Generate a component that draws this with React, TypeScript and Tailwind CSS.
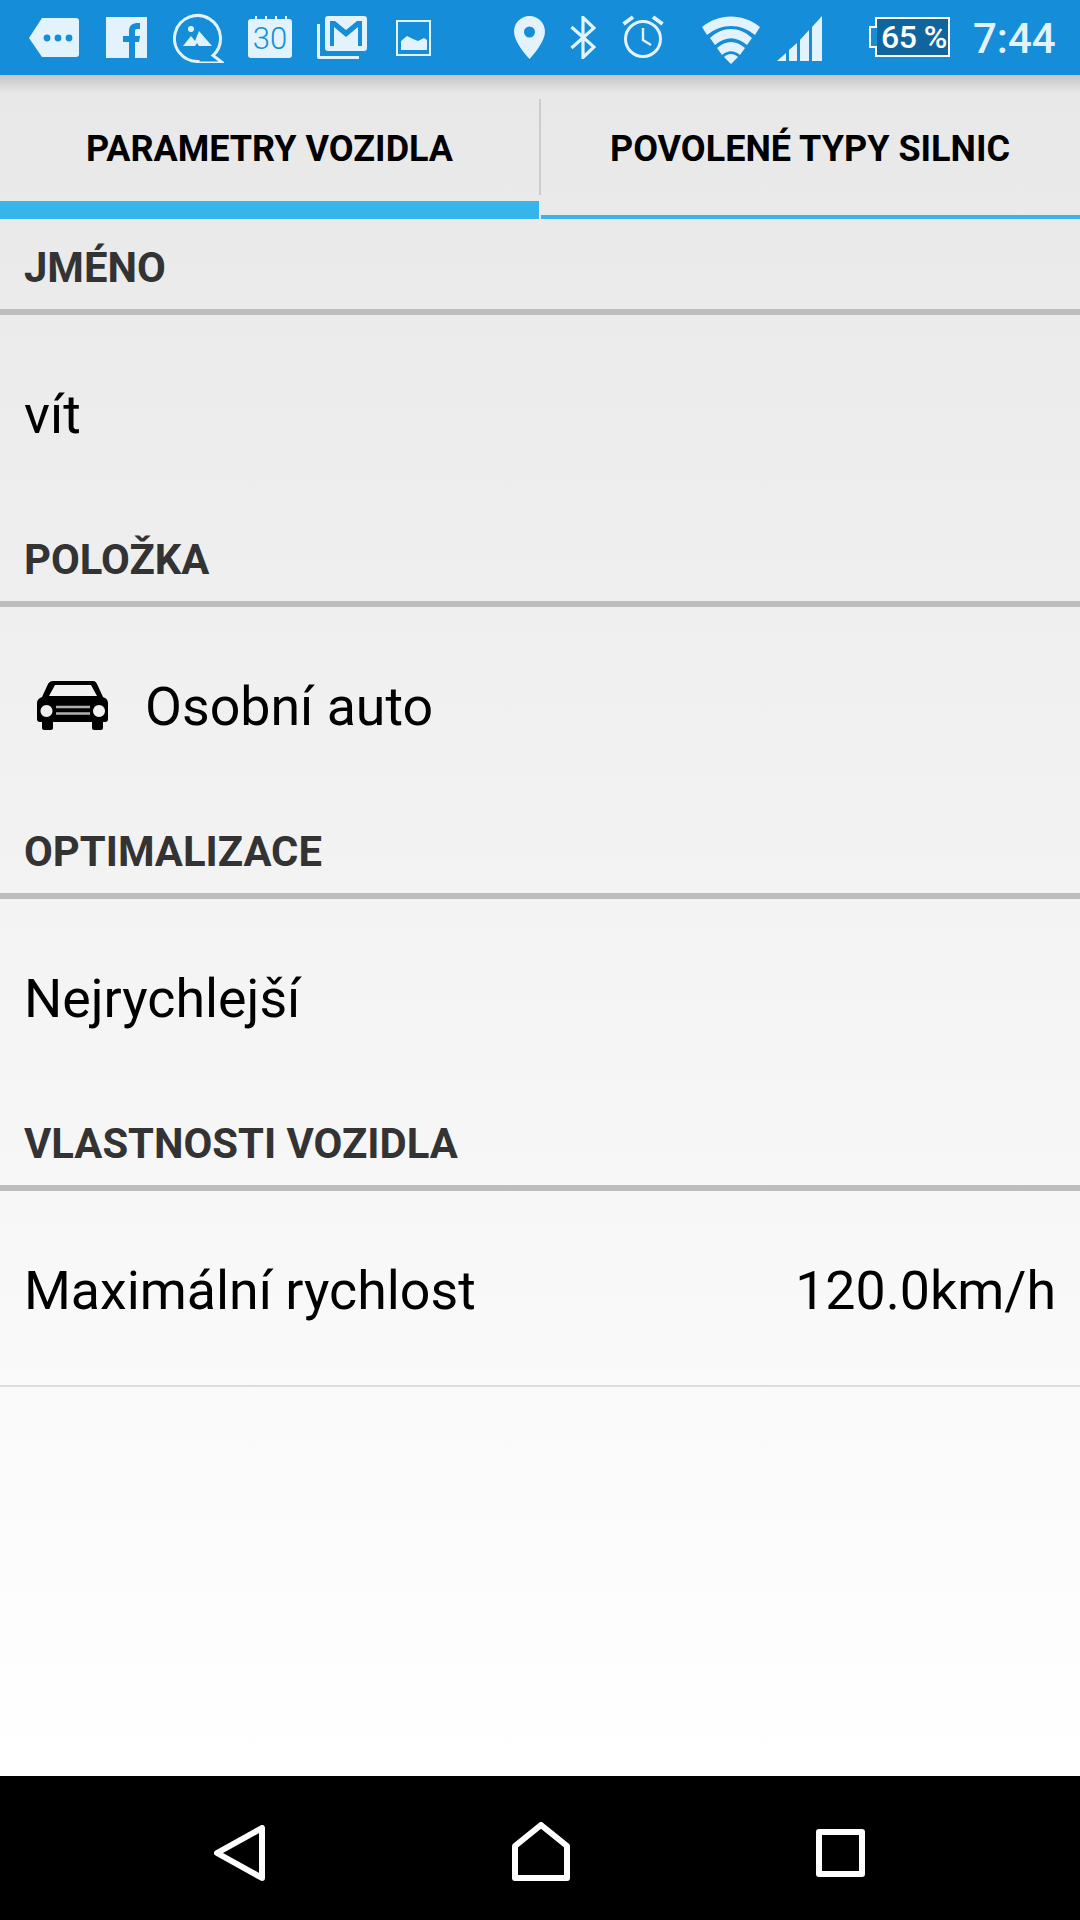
const blue = '#158dd9';
const ice = '#e3f3fd';

function StatusIcons() {
  return (
    <>
      <svg width="50" height="39" viewBox="0 0 50 39" className="ml-[29px] mt-[18px]">
        <path d="M13 0H47a3 3 0 0 1 3 3V36a3 3 0 0 1-3 3H13L0 20Z" fill={ice} />
        <circle cx="18" cy="20" r="3.4" fill={blue} />
        <circle cx="29" cy="20" r="3.4" fill={blue} />
        <circle cx="40" cy="20" r="3.4" fill={blue} />
      </svg>
      <svg width="41" height="41" viewBox="0 0 41 41" className="ml-[27px] mt-[17px]">
        <rect width="41" height="41" fill={ice} />
        <path d="M23 41V25H17V19H23V14C23 8 27 6 32 6H34V12H31C29 12 29 13 29 15V19H34L33 25H29V41Z" fill={blue} />
      </svg>
      <svg width="51" height="51" viewBox="0 0 51 51" className="ml-[26px] mt-[12px]">
        <path d="M25 49.5A23 23 0 1 1 40 43.5L50 51H25Z" fill="none" stroke={ice} strokeWidth="3" />
        <circle cx="18" cy="17" r="3" fill={ice} />
        <path d="M10 34L18 24L22 29L26 19L39 34H26L24 31L22 34Z" fill={ice} />
      </svg>
      <div className="relative ml-[24px] mt-[15px] w-[44px] h-[43px]">
        <svg width="44" height="43" viewBox="0 0 44 43" className="absolute inset-0">
          <path d="M3 4H7V1H9V4H17V1H19V4H27V1H29V4H37V1H39V4H41a3 3 0 0 1 3 3V40a3 3 0 0 1-3 3H3a3 3 0 0 1-3-3V7a3 3 0 0 1 3-3Z" fill={ice} />
        </svg>
        <span className="absolute inset-x-0 top-[6px] text-center text-[31px] leading-[36px] font-light text-[#158dd9]">30</span>
      </div>
      <svg width="50" height="43" viewBox="0 0 50 43" className="ml-[25px] mt-[16px]">
        <path d="M0 8H3V40H42V43H2a2 2 0 0 1-2-2Z" fill={ice} />
        <rect x="8" y="0" width="42" height="35" rx="3" fill={ice} />
        <path d="M13 30V5H18L29 14L40 5H45V30H41V11L29 21L17 11V30Z" fill={blue} />
      </svg>
      <svg width="35" height="36" viewBox="0 0 35 36" className="ml-[29px] mt-[20px]">
        <rect x="1" y="1" width="33" height="34" fill="none" stroke={ice} strokeWidth="2" />
        <path d="M5 30V21L11 16L17 19L22 21L28 18L31 20V30Z" fill={ice} />
      </svg>
      <svg width="31" height="43" viewBox="0 0 31 43" className="ml-[83px] mt-[16px]">
        <path fillRule="evenodd" d="M15.5 0C7 0 0 7 0 15.5C0 25 10 37 15.5 43C21 37 31 25 31 15.5C31 7 24 0 15.5 0ZM15.5 10.5a5.5 5.5 0 1 1 0 11a5.5 5.5 0 0 1 0-11Z" fill={ice} />
      </svg>
      <svg width="26" height="43" viewBox="0 0 26 43" className="ml-[25px] mt-[16px]">
        <path d="M1.5 11L24 31L13 41.5V1.5L24 12L1.5 32" fill="none" stroke={ice} strokeWidth="3.2" />
      </svg>
      <svg width="42" height="43" viewBox="0 0 42 43" className="ml-[26px] mt-[15px]">
        <circle cx="21" cy="24" r="17.5" fill="none" stroke={ice} strokeWidth="3" />
        <path d="M21 13V25L29 30" fill="none" stroke={ice} strokeWidth="2.4" />
        <path d="M1.5 9L11 2M40.5 9L31 2" fill="none" stroke={ice} strokeWidth="4" />
      </svg>
      <svg width="58" height="48" viewBox="0 0 58 48" className="ml-[38px] mt-[16px]">
        <path d="M0 11C17 -3 41 -3 58 11L53 19C38 7 20 7 5 19Z" fill={ice} />
        <path d="M8 22C21 10 37 10 50 22L45 29C34 20 24 20 13 29Z" fill={ice} />
        <path d="M15 32C24 24 34 24 43 32L38 39C32 34 26 34 20 39Z" fill={ice} />
        <path d="M22 41C26 37 32 37 36 41L29 48Z" fill={ice} />
      </svg>
      <svg width="45" height="45" viewBox="0 0 45 45" className="ml-[17px] mt-[16px]">
        <path d="M0 45L9 37V45Z" fill={ice} />
        <path d="M12 34L20 27V45H12Z" fill={ice} />
        <path d="M23 24L32 14V45H23Z" fill={ice} />
        <path d="M35 11L45 0V45H35Z" fill={ice} />
      </svg>
      <div className="ml-[47px] mt-[17px] h-[40px] w-[81px] flex items-stretch">
        <svg width="81" height="40" viewBox="0 0 81 40" className="absolute">
          <path d="M7 1H80V39H7V30H1V10H7Z" fill="#10659f" stroke="#ffffff" strokeWidth="2" />
          <path d="M2 11H8V29H2Z" fill={blue} />
        </svg>
        <span className="relative w-full pl-[12px] text-[32px] leading-[40px] font-medium tracking-[-0.5px] text-white whitespace-nowrap">65 %</span>
      </div>
      <span className="ml-[23px] mt-[16px] text-[42px] leading-[46px] font-medium text-[#e3f3fd]">7:44</span>
    </>
  );
}

function SectionHeader({ title, first }: { title: string; first?: boolean }) {
  return (
    <div className={first ? 'pt-[6px]' : ''}>
      <div className="h-[84px] px-[24px] pt-[3px] flex items-center text-[41.8px] font-bold text-[#333333]">{title}</div>
      <div className="h-[6px] bg-[#bdbdbd]" />
    </div>
  );
}

function CarIcon() {
  return (
    <svg width="71" height="49" viewBox="0 0 71 49" className="ml-[37px] mr-[37px] mb-[4px]">
      <path
        fillRule="evenodd"
        d="M16 0H56C58 0 59 1 60 3L66 16C69 17 71 19 71 22V38C71 40 70 41 68 41H66V47C66 48 65 49 64 49H57C56 49 55 48 55 47V41H16V47C16 48 15 49 14 49H7C6 49 5 48 5 47V41H3C1 41 0 40 0 38V22C0 19 2 17 5 16L11 3C12 1 14 0 16 0ZM18 4L12 15H60L54 4ZM9.5 24a6 6 0 1 0 0.01 0ZM62 24a6 6 0 1 0 0.01 0Z"
        fill="#000000"
      />
      <path d="M19 26H53M19 32.5H53" stroke="#b0b0b0" strokeWidth="2.4" />
    </svg>
  );
}

export default function App() {
  return (
    <div className="relative w-[1080px] h-[1920px] flex flex-col overflow-hidden font-['Roboto',sans-serif] bg-white">
      <div className="h-[75px] flex items-start bg-[#158dd9] shrink-0">
        <StatusIcons />
      </div>

      <div className="flex-1 flex flex-col bg-gradient-to-b from-[#e8e8e8] to-[#ffffff]">
        <div className="h-[144px] flex shrink-0">
          <div className="w-[539px] flex flex-col">
            <div className="flex-1 flex items-center justify-center text-[36px] font-bold text-black pt-[21px]">PARAMETRY VOZIDLA</div>
            <div className="h-[18px] bg-[#35b5e9]" />
          </div>
          <div className="w-[2px] flex flex-col pt-[24px] pb-[24px] bg-transparent">
            <div className="flex-1 bg-[#cccccc]" />
          </div>
          <div className="flex-1 flex flex-col">
            <div className="flex-1 flex items-center justify-center text-[36px] font-bold text-black pt-[8px] pr-[1px]">POVOLENÉ TYPY SILNIC</div>
            <div className="h-[4px] bg-[#35b5e9]" />
          </div>
        </div>

        <SectionHeader title="JMÉNO" first />
        <div className="h-[202px] px-[24px] pb-[2px] flex items-center text-[53.7px] text-black">vít</div>

        <SectionHeader title="POLOŽKA" />
        <div className="h-[202px] pb-[2px] flex items-center text-[53.7px] text-black">
          <CarIcon />
          Osobní auto
        </div>

        <SectionHeader title="OPTIMALIZACE" />
        <div className="h-[202px] px-[24px] pb-[2px] flex items-center text-[53.7px] text-black">Nejrychlejší</div>

        <SectionHeader title="VLASTNOSTI VOZIDLA" />
        <div className="h-[196px] px-[24px] pt-[6px] flex items-center justify-between text-[53.7px] text-black border-b-2 border-[#dddddd]">
          <span>Maximální rychlost</span>
          <span>120.0km/h</span>
        </div>
      </div>

      <div className="h-[144px] shrink-0 bg-black flex items-start">
        <svg width="51" height="56" viewBox="0 0 51 56" className="ml-[214px] mt-[49px]">
          <path d="M48 3V53L3 28Z" fill="none" stroke="#ffffff" strokeWidth="6" strokeLinejoin="round" />
        </svg>
        <svg width="58" height="59" viewBox="0 0 58 59" className="ml-[247px] mt-[46px]">
          <path d="M3 24L29 3L55 24V56H3Z" fill="none" stroke="#ffffff" strokeWidth="6" strokeLinejoin="round" />
        </svg>
        <svg width="49" height="48" viewBox="0 0 49 48" className="ml-[246px] mt-[53px]">
          <rect x="3" y="3" width="43" height="42" fill="none" stroke="#ffffff" strokeWidth="6" strokeLinejoin="round" />
        </svg>
      </div>

      <div className="absolute left-0 right-0 top-[75px] h-[18px] bg-gradient-to-b from-[#00000026] to-transparent" />
    </div>
  );
}
